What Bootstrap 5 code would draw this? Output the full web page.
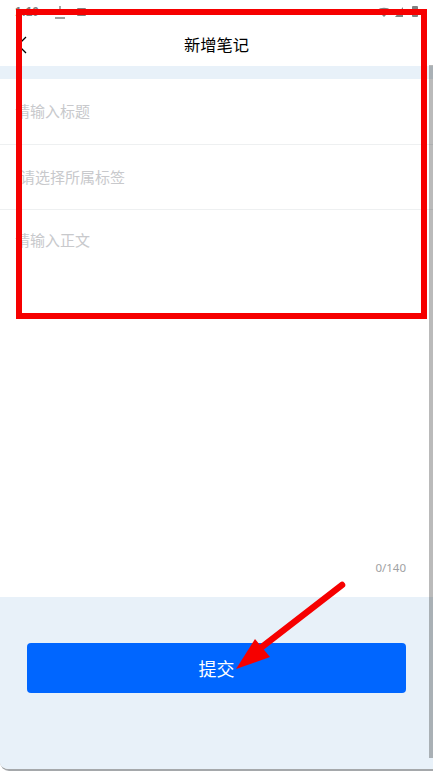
<!DOCTYPE html>
<html lang="zh-CN">
<head>
<meta charset="utf-8">
<title>新增笔记</title>
<link href="https://cdn.jsdelivr.net/npm/bootstrap@5.3.0/dist/css/bootstrap.min.css" rel="stylesheet">
<style>
html,body{height:771px;overflow:hidden;background:#fff;}
body{font-family:"Noto Sans CJK SC","Liberation Sans",sans-serif;}
.app-frame{position:relative;width:433px;height:771px;border-bottom:2px solid #a5a8ab;border-bottom-left-radius:9px;overflow:hidden;}
.status-row{height:23px;padding:0 15px;color:#808080;font-size:12px;}
.status-time{font-family:"Liberation Sans",sans-serif;font-weight:700;}
.title-row{height:43px;color:#000;font-size:16.3px;}
.back-mark{position:absolute;left:17px;top:36px;}
.band{height:13px;background:#e8f1f9;}
.field-row{height:65px;padding-left:15px;border-bottom:1px solid #eef0f1;color:#c8c9cc;font-size:15px;}
.field-first{height:66px;}
.field-shift{padding-left:20px;}
.field-body{padding:20px 0 0 15px;color:#c8c9cc;font-size:15px;line-height:20px;}
.counter{padding-right:27px;padding-bottom:21px;color:#a0a1a3;font-size:11.5px;line-height:16px;font-family:"Noto Sans","Liberation Sans",sans-serif;}
.foot-area{height:172px;background:#e8f1f9;padding:46px 27px 0;}
.submit-btn{height:50px;background:#0066ff;border:0;border-radius:4px;font-size:18px;color:#fff;}
.scroll-thumb{position:absolute;top:65px;right:0;width:4px;height:693px;background:rgba(0,0,0,.27);}
.mark-box{position:absolute;left:16px;top:9px;width:411px;height:310px;border:6px solid #f60000;}
.mark-arrow{position:absolute;left:0;top:0;pointer-events:none;}
</style>
</head>
<body>
<div class="app-frame d-flex flex-column">
  <div class="status-row d-flex align-items-center justify-content-between">
    <div class="d-flex align-items-center gap-3">
      <span class="status-time">1:10</span>
      <svg width="32" height="20" viewBox="0 0 32 20"><path d="M5 4v8M0 16h10" stroke="#808080" stroke-width="1.4" fill="none"/><rect x="22" y="6" width="9" height="8" rx="1" fill="#808080"/></svg>
    </div>
    <svg width="41" height="18" viewBox="0 0 41 18"><path d="M0 7a9 6 0 0 1 14 0l-7 7z" fill="#808080"/><path d="M26 4v10H18z" fill="#808080"/><rect x="35" y="3" width="6" height="11" rx="1" fill="#808080"/></svg>
  </div>
  <div class="title-row d-flex align-items-center justify-content-center">新增笔记</div>
  <svg class="back-mark" width="10" height="18" viewBox="0 0 10 18"><path d="M9 1L1 9l8 8" fill="none" stroke="#000" stroke-width="1.3"/></svg>
  <div class="band"></div>
  <div class="field-row field-first d-flex align-items-center">请输入标题</div>
  <div class="field-row field-shift d-flex align-items-center">请选择所属标签</div>
  <div class="field-body flex-grow-1">请输入正文</div>
  <div class="counter text-end">0/140</div>
  <div class="foot-area">
    <button type="button" class="btn submit-btn w-100 d-flex align-items-center justify-content-center">提交</button>
  </div>
  <div class="scroll-thumb"></div>
  <div class="mark-box"></div>
  <svg class="mark-arrow" width="433" height="771" viewBox="0 0 433 771">
    <path d="M342 585L258 650" stroke="#f60000" stroke-width="6.5" stroke-linecap="round" fill="none"/>
    <path d="M236 669L255 639L270 657Z" fill="#f60000"/>
  </svg>
</div>
</body>
</html>
